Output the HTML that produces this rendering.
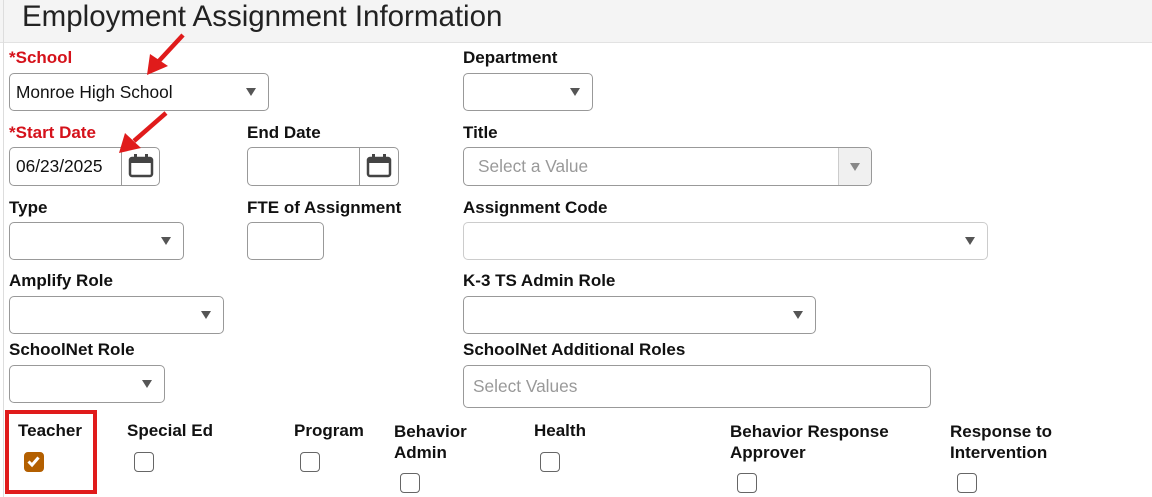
<!DOCTYPE html>
<html><head><meta charset="utf-8"><style>
*{box-sizing:border-box;margin:0;padding:0}
body{width:1152px;height:497px;overflow:hidden;background:#fff;font-family:"Liberation Sans",Arial,sans-serif;position:relative;color:#111}
.a{position:absolute}
.hdr{left:0;top:0;width:1152px;height:43px;background:#f4f4f4;border-bottom:1px solid #e2e2e2}
.vl{left:3px;top:0;width:1px;height:497px;background:#ddd}
.title{left:22px;top:-1px;font-size:29.5px;color:#222;line-height:36px}
.lbl{font-size:17px;font-weight:bold;line-height:19px;white-space:nowrap}
.red{color:#d5121b}
.box{border:1px solid #999;border-radius:5px;background:#fff;font-size:17.3px;line-height:37px;padding-left:6px}
.arr{position:absolute;width:0;height:0;border-left:5px solid transparent;border-right:5px solid transparent;border-top:8px solid #555;top:50%;margin-top:-4px}
.cal{position:absolute;top:0;right:0;height:100%;border-left:1px solid #999}
.cb{position:absolute;width:20px;height:20px;border:1.5px solid #666;border-radius:4px;background:#fff}
</style></head><body>
<div class="a hdr"></div>
<div class="a vl"></div>
<div class="a title">Employment Assignment Information</div>

<div class="a lbl red" style="left:9px;top:48px">*School</div>
<div class="a box" style="left:9px;top:73px;width:260px;height:38px">Monroe High School<span class="arr" style="right:12px"></span></div>

<div class="a lbl" style="left:463px;top:48px">Department</div>
<div class="a box" style="left:463px;top:73px;width:130px;height:38px"><span class="arr" style="right:12px"></span></div>

<div class="a lbl red" style="left:9px;top:123px">*Start Date</div>
<div class="a box" style="left:9px;top:147px;width:151px;height:39px">06/23/2025<div class="cal" style="width:38px"><svg width="38" height="37" viewBox="0 0 38 37"><rect x="8" y="10" width="22" height="18" rx="2" fill="none" stroke="#444" stroke-width="2.5"/><rect x="8" y="10" width="22" height="5" fill="#444"/><rect x="12" y="6" width="3" height="6" fill="#444"/><rect x="23" y="6" width="3" height="6" fill="#444"/></svg></div></div>

<div class="a lbl" style="left:247px;top:123px">End Date</div>
<div class="a box" style="left:247px;top:147px;width:152px;height:39px"><div class="cal" style="width:39px"><svg width="38" height="37" viewBox="0 0 38 37"><rect x="8" y="10" width="22" height="18" rx="2" fill="none" stroke="#444" stroke-width="2.5"/><rect x="8" y="10" width="22" height="5" fill="#444"/><rect x="12" y="6" width="3" height="6" fill="#444"/><rect x="23" y="6" width="3" height="6" fill="#444"/></svg></div></div>

<div class="a lbl" style="left:463px;top:123px">Title</div>
<div class="a box" style="left:463px;top:147px;width:409px;height:39px;color:#999;padding-left:14px">Select a Value<div class="cal" style="width:33px;background:#f0f0f0;border-left-color:#ccc;border-radius:0 5px 5px 0"><span class="arr" style="right:11px;border-top-color:#888"></span></div></div>

<div class="a lbl" style="left:9px;top:198px">Type</div>
<div class="a box" style="left:9px;top:222px;width:175px;height:38px"><span class="arr" style="right:12px"></span></div>

<div class="a lbl" style="left:247px;top:198px">FTE of Assignment</div>
<div class="a box" style="left:247px;top:222px;width:77px;height:38px"></div>

<div class="a lbl" style="left:463px;top:198px">Assignment Code</div>
<div class="a box" style="left:463px;top:222px;width:525px;height:38px;border-color:#ccc"><span class="arr" style="right:12px"></span></div>

<div class="a lbl" style="left:9px;top:271px">Amplify Role</div>
<div class="a box" style="left:9px;top:296px;width:215px;height:38px"><span class="arr" style="right:12px"></span></div>

<div class="a lbl" style="left:463px;top:271px">K-3 TS Admin Role</div>
<div class="a box" style="left:463px;top:296px;width:353px;height:38px"><span class="arr" style="right:12px"></span></div>

<div class="a lbl" style="left:9px;top:340px">SchoolNet Role</div>
<div class="a box" style="left:9px;top:365px;width:156px;height:38px"><span class="arr" style="right:12px"></span></div>

<div class="a lbl" style="left:463px;top:340px">SchoolNet Additional Roles</div>
<div class="a box" style="left:463px;top:365px;width:468px;height:43px;color:#999;padding-left:9px;line-height:41px">Select Values</div>

<div class="a" style="left:5px;top:410px;width:92px;height:84px;border:4px solid #e01b1b"></div>
<div class="a lbl" style="left:18px;top:421px">Teacher</div>
<div class="cb" style="left:24px;top:452px;background:#b35f00;border-color:#b35f00"><svg width="17" height="17" viewBox="0 0 17 17" style="position:absolute;left:0;top:0"><path d="M3.5 8.5 L7 12 L13.5 4.5" fill="none" stroke="#fff" stroke-width="3"/></svg></div>

<div class="a lbl" style="left:127px;top:421px">Special Ed</div>
<div class="cb" style="left:134px;top:452px"></div>
<div class="a lbl" style="left:294px;top:421px">Program</div>
<div class="cb" style="left:300px;top:452px"></div>
<div class="a lbl" style="left:394px;top:421px;line-height:21px">Behavior<br>Admin</div>
<div class="cb" style="left:400px;top:473px"></div>
<div class="a lbl" style="left:534px;top:421px">Health</div>
<div class="cb" style="left:540px;top:452px"></div>
<div class="a lbl" style="left:730px;top:421px;line-height:21px">Behavior Response<br>Approver</div>
<div class="cb" style="left:737px;top:473px"></div>
<div class="a lbl" style="left:950px;top:421px;line-height:21px">Response to<br>Intervention</div>
<div class="cb" style="left:957px;top:473px"></div>

<svg class="a" style="left:0;top:0" width="300" height="200" viewBox="0 0 300 200">
<path d="M183 35 L158 62" stroke="#e01b1b" stroke-width="4.5" fill="none"/>
<path d="M147 75 L150 54 L168 66 Z" fill="#e01b1b"/>
<path d="M166 113 L134 141" stroke="#e01b1b" stroke-width="4.5" fill="none"/>
<path d="M119 153 L125 133 L141 148 Z" fill="#e01b1b"/>
</svg>
</body></html>
